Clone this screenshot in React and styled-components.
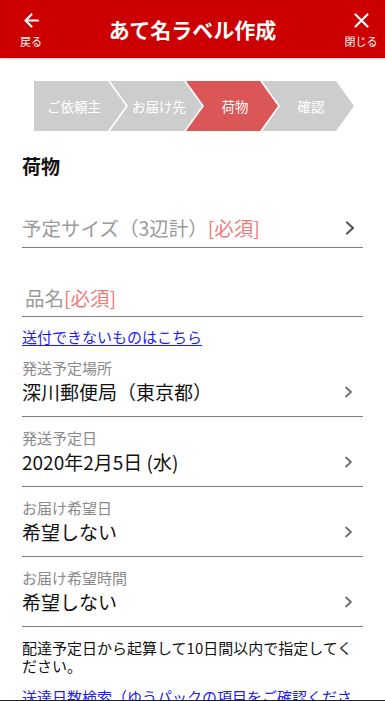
import React from "react";
import styled, { createGlobalStyle } from "styled-components";

const GlobalStyle = createGlobalStyle`
  html, body { margin: 0; padding: 0; background: #fff; }
  body {
    font-family: "Noto Sans CJK JP", "Noto Sans", Roboto, sans-serif;
    color: #111;
    -webkit-font-smoothing: antialiased;
  }
  * { box-sizing: border-box; }
`;

const Page = styled.div`
  width: 385px;
  min-height: 701px;
  background: #fff;
`;

const Header = styled.header`
  height: 58px;
  background: #cc0000;
  display: grid;
  grid-template-columns: 62px 1fr 62px;
  align-items: stretch;
  box-shadow: 0 1px 2px rgba(0, 0, 0, 0.18);
  position: relative;
  z-index: 1;
`;

const HeaderButton = styled.div`
  width: 48px;
  justify-self: ${(p) => (p.$right ? "end" : "center")};
  display: flex;
  flex-direction: column;
  align-items: center;
  padding-top: 12px;
  color: #fff;
`;

const HeaderIcon = styled.svg`
  width: 17px;
  height: 17px;
  display: block;
`;

const HeaderButtonLabel = styled.span`
  font-size: 11px;
  line-height: 14px;
  margin-top: 5px;
  color: #fff;
`;

const Title = styled.h1`
  margin: 0;
  align-self: center;
  text-align: center;
  color: #fff;
  font-size: 21px;
  font-weight: 700;
  line-height: 28px;
  margin-top: -1px;
`;

const Steps = styled.div`
  display: flex;
  padding: 23px 0 0 34px;
`;

const Step = styled.div`
  width: 92px;
  height: 50px;
  flex: none;
  margin-left: ${(p) => (p.$first ? 0 : -16)}px;
  background: ${(p) => (p.$active ? "#db5656" : "#cdcdcd")};
  clip-path: ${(p) =>
    p.$first
      ? "polygon(0 0, 74px 0, 92px 50%, 74px 100%, 0 100%)"
      : "polygon(0 0, 74px 0, 92px 50%, 74px 100%, 0 100%, 18px 50%)"};
  display: flex;
  align-items: center;
  justify-content: center;
  padding-left: ${(p) => (p.$first ? 4 : 22)}px;
  padding-right: 16px;
  color: #fff;
  font-size: 13.5px;
  white-space: nowrap;
`;

const Content = styled.main`
  padding: 0 22px;
`;

const SectionTitle = styled.h2`
  margin: 22px 0 0;
  font-size: 19px;
  font-weight: 700;
  line-height: 26px;
  color: #111;
`;

const PlaceholderRow = styled.div`
  margin-top: ${(p) => p.$mt}px;
  height: ${(p) => p.$h}px;
  display: flex;
  align-items: center;
  justify-content: space-between;
  padding-left: ${(p) => p.$indent || 0}px;
  padding-right: 8px;
  border-bottom: 1px solid #7d7d7d;
`;

const Placeholder = styled.span`
  font-size: 19.5px;
  line-height: 26px;
  color: #9a9a9a;
`;

const Required = styled.span`
  color: #f07a7a;
`;

const Link = styled.a`
  display: block;
  margin-top: ${(p) => p.$mt}px;
  font-size: 15px;
  line-height: 21px;
  color: #1d1df0;
  text-decoration: underline;
  text-underline-offset: 2px;
`;

const Field = styled.div`
  padding: 11px 0 11px;
  border-bottom: 1px solid #7d7d7d;
`;

const FieldLabel = styled.div`
  font-size: 15px;
  line-height: 20px;
  color: #8a8a8a;
`;

const FieldValueRow = styled.div`
  display: flex;
  align-items: center;
  justify-content: space-between;
  height: 27px;
  padding-right: 10px;
`;

const FieldValue = styled.span`
  font-size: 19px;
  line-height: 27px;
  color: #111;
`;

const Note = styled.p`
  margin: 12px 0 0;
  font-size: 15px;
  line-height: 18px;
  color: #111;
`;

const BottomEdge = styled.div`
  position: fixed;
  left: 0;
  right: 0;
  bottom: 0;
  height: 1px;
  background: #222;
`;

const ChevronSvg = styled.svg`
  display: block;
  flex: none;
`;

function Chevron({ strong }) {
  return strong ? (
    <ChevronSvg width="10" height="14" viewBox="0 0 10 14">
      <polyline points="2,1.5 8,7 2,12.5" fill="none" stroke="#555" strokeWidth="2.2" strokeLinecap="round" strokeLinejoin="round" />
    </ChevronSvg>
  ) : (
    <ChevronSvg width="9" height="12" viewBox="0 0 9 12">
      <polyline points="2,1.5 7,6 2,10.5" fill="none" stroke="#6a6a6a" strokeWidth="1.7" strokeLinecap="round" strokeLinejoin="round" />
    </ChevronSvg>
  );
}

const steps = [
  { label: "ご依頼主" },
  { label: "お届け先" },
  { label: "荷物", active: true },
  { label: "確認" },
];

const fields = [
  { label: "発送予定場所", value: "深川郵便局（東京都）" },
  { label: "発送予定日", value: "2020年2月5日 (水)" },
  { label: "お届け希望日", value: "希望しない" },
  { label: "お届け希望時間", value: "希望しない" },
];

export default function App() {
  return (
    <Page>
      <GlobalStyle />
      <Header>
        <HeaderButton>
          <HeaderIcon viewBox="0 0 17 17">
            <path d="M15 8.5H2.5M8.5 2.5L2.5 8.5L8.5 14.5" fill="none" stroke="#fff" strokeWidth="2.2" strokeLinecap="round" strokeLinejoin="round" />
          </HeaderIcon>
          <HeaderButtonLabel>戻る</HeaderButtonLabel>
        </HeaderButton>
        <Title>あて名ラベル作成</Title>
        <HeaderButton $right>
          <HeaderIcon viewBox="0 0 17 17">
            <path d="M2.5 2.5L14.5 14.5M14.5 2.5L2.5 14.5" fill="none" stroke="#fff" strokeWidth="2.2" strokeLinecap="round" />
          </HeaderIcon>
          <HeaderButtonLabel>閉じる</HeaderButtonLabel>
        </HeaderButton>
      </Header>

      <Steps>
        {steps.map((s, i) => (
          <Step key={s.label} $first={i === 0} $active={s.active}>
            {s.label}
          </Step>
        ))}
      </Steps>

      <Content>
        <SectionTitle>荷物</SectionTitle>

        <PlaceholderRow $mt={29} $h={40}>
          <Placeholder>
            予定サイズ（3辺計）<Required>[必須]</Required>
          </Placeholder>
          <Chevron strong />
        </PlaceholderRow>

        <PlaceholderRow $mt={31} $h={38} $indent={3}>
          <Placeholder>
            品名<Required>[必須]</Required>
          </Placeholder>
        </PlaceholderRow>

        <Link href="#" $mt={9}>送付できないものはこちら</Link>

        {fields.map((f) => (
          <Field key={f.label}>
            <FieldLabel>{f.label}</FieldLabel>
            <FieldValueRow>
              <FieldValue>{f.value}</FieldValue>
              <Chevron />
            </FieldValueRow>
          </Field>
        ))}

        <Note>配達予定日から起算して10日間以内で指定してください。</Note>

        <Link href="#" $mt={11}>送達日数検索（ゆうパックの項目をご確認ください）</Link>
      </Content>
      <BottomEdge />
    </Page>
  );
}
